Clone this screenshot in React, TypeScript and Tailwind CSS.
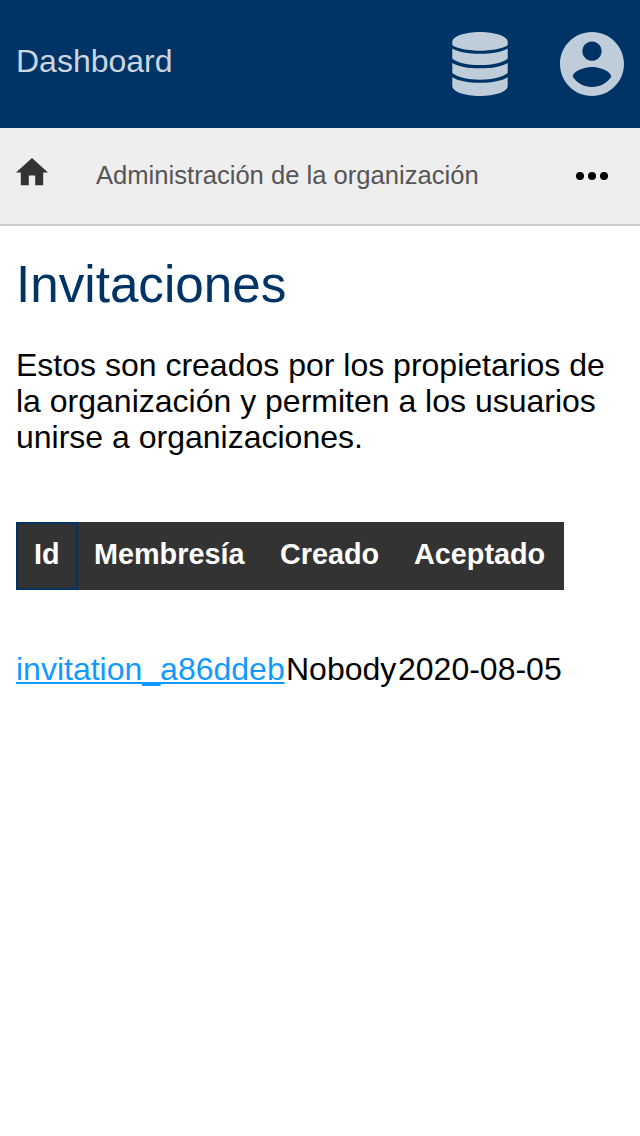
const DatabaseIcon = () => (
  <svg viewBox="0 0 56 64" className="h-16 w-14" fill="currentColor">
    <path d="M28 0C43 0 55.700 4.300 55.700 9.800V12.500C55.700 15 43 18.700 28 18.700S.3 15 .3 12.500V9.800C.3 4.300 13 0 28 0z" />
    <path d="M.3 16.500C6 20 16 21.800 28 21.800S50 20 55.700 16.500V26.700C50 31 40 33.100 28 33.100S6 31 .3 26.700z" />
    <path d="M.3 30.900C6 34.500 16 36.300 28 36.300S50 34.500 55.700 30.900V41C50 45.500 40 47.700 28 47.700S6 45.500 .3 41z" />
    <path d="M.3 45.300C6 48.900 16 50.800 28 50.800S50 48.900 55.700 45.300V54C55.700 59.700 43 64 28 64S.3 59.700 .3 54z" />
  </svg>
);

const AccountIcon = () => (
  <svg viewBox="2 2 20 20" className="size-16" fill="currentColor">
    <path d="M12 2C6.480 2 2 6.480 2 12s4.480 10 10 10 10-4.480 10-10S17.520 2 12 2zm0 3c1.660 0 3 1.340 3 3s-1.340 3-3 3-3-1.340-3-3 1.340-3 3-3zm0 14.200c-2.500 0-4.710-1.280-6-3.220.030-1.990 4-3.080 6-3.080 1.990 0 5.970 1.090 6 3.080-1.290 1.940-3.500 3.220-6 3.220z" />
  </svg>
);

export default function App() {
  return (
    <div className="min-h-[1136px] w-[640px] bg-white font-['Liberation_Sans',Arial,sans-serif] text-black">
      <header className="flex h-32 items-center bg-[#003366] px-4 text-[#bfccd9]">
        <a className="mb-1.5 text-[32px] leading-9 text-[#ccd6e0]">Dashboard</a>
        <div className="ml-auto flex items-center gap-[52px]">
          <DatabaseIcon />
          <AccountIcon />
        </div>
      </header>
      <nav className="flex h-[98px] items-center border-b-2 border-[#cccccc] bg-[#eeeeee] px-4">
        <svg viewBox="2 3 20 17" className="mb-2 h-[27.2px] w-8 text-[#333333]" fill="currentColor">
          <path d="M10 20v-6h4v6h5v-8h3L12 3 2 12h3v8z" />
        </svg>
        <span className="mb-0.5 ml-12 text-[25.6px] leading-8 text-[#555555]">Administración de la organización</span>
        <svg viewBox="4 10 16 4" className="mr-4 ml-auto h-2 w-8" fill="currentColor">
          <circle cx="6" cy="12" r="2" />
          <circle cx="12" cy="12" r="2" />
          <circle cx="18" cy="12" r="2" />
        </svg>
      </nav>
      <main className="px-4">
        <h1 className="pt-[29px] text-[51.2px] leading-[60px] text-[#003366]">Invitaciones</h1>
        <p className="mt-8 text-[32px] leading-9">
          Estos son creados por los propietarios de la organización y permiten a los usuarios unirse a organizaciones.
        </p>
        <div className="mt-[67px] flex h-[68px] w-[548px] bg-[#333333] text-[28.8px] leading-8 font-bold text-white">
          <div className="w-[62px] border-2 border-[#003366] px-4 pt-[14px]">Id</div>
          <div className="w-[186px] px-4 pt-4">Membresía</div>
          <div className="w-[134px] pl-4 pt-4">Creado</div>
          <div className="pl-4 pt-4">Aceptado</div>
        </div>
        <div className="mt-[61px] flex text-[32px] leading-9">
          <div className="w-[270px]">
            <a className="text-[#1199ff] underline decoration-2 underline-offset-2 [text-decoration-skip-ink:none]">invitation_a86ddeb</a>
          </div>
          <span className="w-28">Nobody</span>
          <span>2020-08-05</span>
        </div>
      </main>
    </div>
  );
}
